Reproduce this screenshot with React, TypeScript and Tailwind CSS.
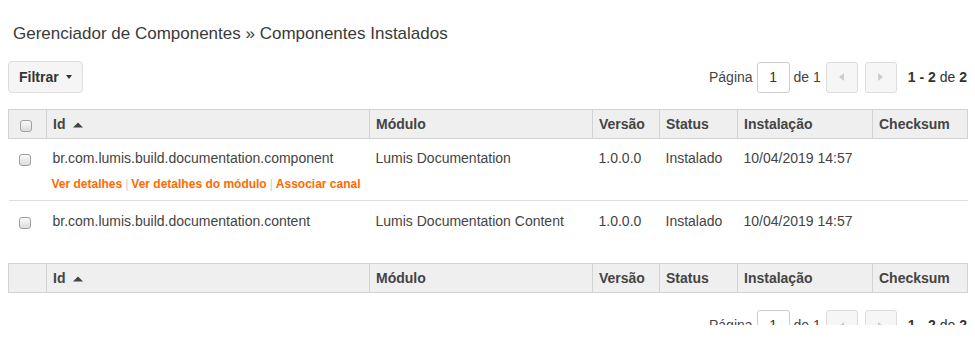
import React from "react";

const rows = [
  {
    id: "br.com.lumis.build.documentation.component",
    modulo: "Lumis Documentation",
    versao: "1.0.0.0",
    status: "Instalado",
    instalacao: "10/04/2019 14:57",
    links: true,
  },
  {
    id: "br.com.lumis.build.documentation.content",
    modulo: "Lumis Documentation Content",
    versao: "1.0.0.0",
    status: "Instalado",
    instalacao: "10/04/2019 14:57",
    links: false,
  },
];

const Checkbox = () => (
  <span className="inline-block h-[12px] w-[12px] rounded-[3px] border border-[#a0a0a0] bg-gradient-to-b from-[#fafafa] to-[#dcdcdc] align-middle" />
);

const SortUp = () => (
  <svg width="10" height="6" viewBox="0 0 10 6" className="ml-[8px] inline-block">
    <path d="M0 5.5 L5 0.5 L10 5.5 Z" fill="#444" />
  </svg>
);

const Pager = () => (
  <div className="flex items-center text-[14px] text-[#444]">
    <span>Página</span>
    <div className="ml-[4px] flex h-[31px] w-[33px] items-center justify-center rounded-[3px] border border-[#ccc] bg-white text-[#333]">
      1
    </div>
    <span className="ml-[4px]">de 1</span>
    <div className="ml-[5px] flex h-[31px] w-[32px] items-center justify-center rounded-[3px] border border-[#ddd] bg-[#f6f6f6]">
      <svg width="5" height="8" viewBox="0 0 5 8">
        <path d="M5 0 L0 4 L5 8 Z" fill="#ccc" />
      </svg>
    </div>
    <div className="ml-[7px] flex h-[31px] w-[32px] items-center justify-center rounded-[3px] border border-[#ddd] bg-[#f6f6f6]">
      <svg width="5" height="8" viewBox="0 0 5 8">
        <path d="M0 0 L5 4 L0 8 Z" fill="#ccc" />
      </svg>
    </div>
    <span className="ml-[11px] text-[#333]">
      <b>1 - 2</b> de <b>2</b>
    </span>
  </div>
);

const HeaderRow = ({ check }: { check: boolean }) => (
  <tr className="h-[29px] bg-[#efefef] text-left text-[14px] font-bold text-[#444]">
    <th className="border border-[#d3d3d3] pl-[11px] pt-[3px] font-normal">{check && <Checkbox />}</th>
    <th className="border border-[#d3d3d3] pl-[6px]">
      Id
      <SortUp />
    </th>
    <th className="border border-[#d3d3d3] pl-[6px]">Módulo</th>
    <th className="border border-[#d3d3d3] pl-[6px]">Versão</th>
    <th className="border border-[#d3d3d3] pl-[6px]">Status</th>
    <th className="border border-[#d3d3d3] pl-[6px]">Instalação</th>
    <th className="border border-[#d3d3d3] pl-[6px]">Checksum</th>
  </tr>
);

export default function App() {
  return (
    <div className="h-[325px] overflow-hidden bg-white px-[8px] font-['Liberation_Sans',Arial,sans-serif]">
      <h1 className="mt-[24px] pl-[5px] text-[17px] leading-[20px] text-[#3a3a3a]">
        Gerenciador de Componentes » Componentes Instalados
      </h1>

      <div className="mt-[17px] flex items-center justify-between">
        <button className="flex h-[32px] items-center rounded-[4px] border border-[#ddd] bg-[#f5f5f5] px-[10px] text-[14px] font-bold text-[#333]">
          Filtrar
          <svg width="6" height="4" viewBox="0 0 6 4" className="ml-[7px]">
            <path d="M0 0 L6 0 L3 4 Z" fill="#333" />
          </svg>
        </button>
        <Pager />
      </div>

      <table className="mt-[16px] w-full table-fixed border-collapse">
        <colgroup>
          <col className="w-[38px]" />
          <col className="w-[323px]" />
          <col className="w-[223px]" />
          <col className="w-[67px]" />
          <col className="w-[78px]" />
          <col className="w-[135px]" />
          <col className="w-[95px]" />
        </colgroup>
        <thead>
          <HeaderRow check />
        </thead>
        <tbody className="text-[14px] text-[#444]">
          {rows.map((r, i) => (
            <tr key={r.id} className={i === 0 ? "border-b border-[#ddd]" : ""}>
              <td className={`${i === 0 ? "h-[62px] pt-[10px]" : "h-[63px] pt-[11px]"} pl-[10px] align-top`}>
                <Checkbox />
              </td>
              <td className={`${i === 0 ? "pt-[9px]" : "pt-[10px]"} pl-[6px] align-top`}>
                <div className="leading-[20px]">{r.id}</div>
                {r.links && (
                  <div className="mt-[8px] whitespace-nowrap text-[12px] font-bold leading-[16px] text-[#ff6a00]">
                    <span className="-ml-[1px]">Ver detalhes</span>
                    <span className="mx-[3px] font-normal text-[#ccc]">|</span>
                    <span>Ver detalhes do módulo</span>
                    <span className="mx-[3px] font-normal text-[#ccc]">|</span>
                    <span>Associar canal</span>
                  </div>
                )}
              </td>
              <td className={`${i === 0 ? "pt-[9px]" : "pt-[10px]"} pl-[6px] align-top leading-[20px]`}>{r.modulo}</td>
              <td className={`${i === 0 ? "pt-[9px]" : "pt-[10px]"} pl-[6px] align-top leading-[20px]`}>{r.versao}</td>
              <td className={`${i === 0 ? "pt-[9px]" : "pt-[10px]"} pl-[6px] align-top leading-[20px]`}>{r.status}</td>
              <td className={`${i === 0 ? "pt-[9px]" : "pt-[10px]"} pl-[6px] align-top leading-[20px]`}>{r.instalacao}</td>
              <td className="pl-[6px] align-top"></td>
            </tr>
          ))}
        </tbody>
        <tfoot>
          <HeaderRow check={false} />
        </tfoot>
      </table>

      <div className="mt-[17px] flex justify-end">
        <Pager />
      </div>
    </div>
  );
}
